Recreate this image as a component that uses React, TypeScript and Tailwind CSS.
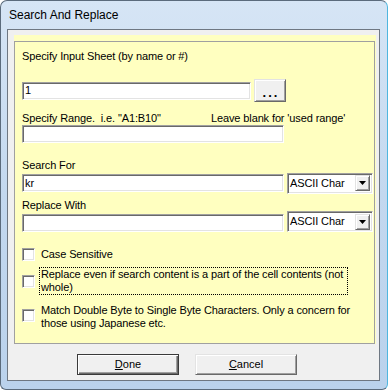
import React from "react";

const sunken =
  "bg-white border border-t-[#a0a0a0] border-l-[#a0a0a0] border-b-[#ffffff] border-r-[#ffffff] shadow-[inset_1px_1px_0_#696969,inset_-1px_-1px_0_#e3e3e3]";
const raised =
  "bg-[#f0f0f0] border border-t-[#e3e3e3] border-l-[#e3e3e3] border-b-[#696969] border-r-[#696969] shadow-[inset_1px_1px_0_#ffffff,inset_-1px_-1px_0_#a0a0a0]";

function Select() {
  return (
    <div className={`ml-[3px] w-[86px] h-[21px] flex items-center ${sunken}`}>
      <span className="ml-[2px] flex-1 text-[11px] leading-[13px] text-black">ASCII Char</span>
      <div className={`w-[15px] h-[16px] mr-[2px] flex items-center justify-center ${raised}`}>
        <svg width="7" height="4" viewBox="0 0 7 4">
          <path d="M0 0h7L3.5 4z" fill="#000" />
        </svg>
      </div>
    </div>
  );
}

function Check() {
  return <div className={`w-[13px] h-[13px] shrink-0 ${sunken}`} />;
}

export default function App() {
  return (
    <div className="w-[388px] h-[390px] bg-white font-['Liberation_Sans',Arial,sans-serif] text-black overflow-hidden">
      <div className="w-[388px] h-[390px] rounded-t-[7px] rounded-b-[6px] border border-[#5b6b7c] border-r-[#4fb6df] bg-gradient-to-b from-[#d6e5f5] via-[#c3d8ef] to-[#bad2ec] flex flex-col">
        <div className="h-[28px] flex items-center pl-[8px] text-[12px] leading-[14px] text-black">
          Search And Replace
        </div>
        <div className="ml-[6px] w-[373px] h-[352px] border border-[#6e7782] bg-[#f0f0f0] flex flex-col">
          <div className="mt-[5px] ml-[6px] w-[362px] h-[309px] pt-[6px] pr-[1px] bg-[#ffffc0] flex flex-col">
            <div className="flex-1 border border-[#a0a0a0] pl-[7px] flex flex-col text-[11px] leading-[13px] tracking-[-0.12px]">
              <div className="mt-[8px] h-[13px]">Specify Input Sheet (by name or #)</div>

              <div className="mt-[16px] h-[23px] flex items-center">
                <div className={`w-[229px] h-[18px] flex items-center ${sunken}`}>
                  <span className="ml-[2px]">1</span>
                </div>
                <div className={`ml-[3px] w-[32px] h-[23px] flex items-end justify-center pb-[2px] ${raised}`}>
                  <span className="text-[13px] leading-[13px] font-bold tracking-[2px] pl-[2px]">...</span>
                </div>
              </div>

              <div className="mt-[10px] h-[13px] flex">
                <span className="w-[189px] whitespace-pre">Specify Range.  i.e. "A1:B10"</span>
                <span className="whitespace-pre">Leave blank for 'used range'</span>
              </div>
              <div className={`w-[262px] h-[18px] ${sunken}`} />

              <div className="mt-[16px] h-[13px]">Search For</div>
              <div className="mt-[1px] h-[20px] flex items-center">
                <div className={`w-[262px] h-[18px] flex items-center ${sunken}`}>
                  <span className="ml-[2px]">kr</span>
                </div>
                <Select />
              </div>

              <div className="mt-[6px] h-[13px]">Replace With</div>
              <div className="h-[20px] flex items-end">
                <div className={`w-[262px] h-[18px] ${sunken}`} />
                <Select />
              </div>

              <div className="mt-[16px] h-[13px] flex items-center">
                <Check />
                <span className="ml-[6px]">Case Sensitive</span>
              </div>

              <div className="mt-[6px] flex items-start">
                <div className="mt-[8px]">
                  <Check />
                </div>
                <div className="ml-[4px] w-[309px] border border-dotted border-black pl-[1px] whitespace-nowrap">
                  Replace even if search content is a part of the cell contents (not
                  <br />
                  whole)
                </div>
              </div>

              <div className="mt-[8px] flex items-start">
                <div className="mt-[6px]">
                  <Check />
                </div>
                <div className="ml-[4px] w-[309px] border border-transparent pl-[1px] whitespace-nowrap">
                  Match Double Byte to Single Byte Characters. Only a concern for
                  <br />
                  those using Japanese etc.
                </div>
              </div>
            </div>
          </div>

          <div className="mt-[10px] flex text-[11px] leading-[13px]">
            <div className="ml-[69px] w-[102px] h-[21px] flex items-center justify-center bg-[#f0f0f0] border border-[#3a3a3a] shadow-[inset_1px_1px_0_#ffffff,inset_-1px_-1px_0_#696969,inset_-2px_-2px_0_#a0a0a0]">
              <span>
                <span className="underline">D</span>one
              </span>
            </div>
            <div className={`ml-[16px] w-[102px] h-[21px] flex items-center justify-center ${raised}`}>
              <span>
                <span className="underline">C</span>ancel
              </span>
            </div>
          </div>
        </div>
      </div>
    </div>
  );
}
